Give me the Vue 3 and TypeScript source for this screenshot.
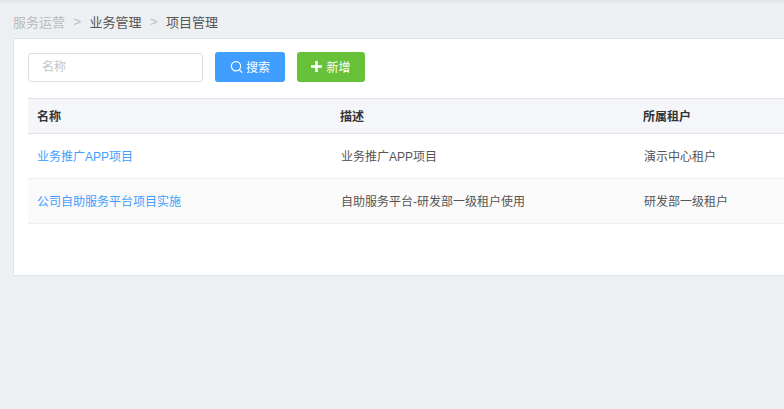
<template>
  <div class="page">
    <div class="breadcrumb">
      <span class="crumb muted">服务运营</span>
      <span class="sep">&gt;</span>
      <span class="crumb">业务管理</span>
      <span class="sep">&gt;</span>
      <span class="crumb">项目管理</span>
    </div>

    <div class="card">
      <div class="toolbar">
        <input class="search-input" type="text" placeholder="名称" />
        <button class="btn btn-search">
          <svg width="13" height="14" viewBox="0 0 13 14" fill="none">
            <circle cx="6" cy="6.2" r="4.6" stroke="currentColor" stroke-width="1.2" />
            <path d="M9.5 9.8l2.4 2.5" stroke="currentColor" stroke-width="1.2" stroke-linecap="round" />
          </svg>
          搜索
        </button>
        <button class="btn btn-add">
          <svg width="11" height="11" viewBox="0 0 11 11">
            <path d="M4.2 0h2.6v4.2H11v2.6H6.8V11H4.2V6.8H0V4.2h4.2z" fill="currentColor" />
          </svg>
          新增
        </button>
      </div>

      <div class="table">
        <div class="row head">
          <div class="cell">名称</div>
          <div class="cell">描述</div>
          <div class="cell">所属租户</div>
        </div>
        <div v-for="(item, index) in projects" :key="index" class="row body" :class="{ striped: index % 2 === 1 }">
          <div class="cell"><a class="link">{{ item.name }}</a></div>
          <div class="cell">{{ item.desc }}</div>
          <div class="cell">{{ item.tenant }}</div>
        </div>
      </div>
    </div>
  </div>
</template>

<script setup lang="ts">
import { ref } from 'vue';

interface Project {
  name: string;
  desc: string;
  tenant: string;
}

const projects = ref<Project[]>([
  { name: '业务推广APP项目', desc: '业务推广APP项目', tenant: '演示中心租户' },
  { name: '公司自助服务平台项目实施', desc: '自助服务平台-研发部一级租户使用', tenant: '研发部一级租户' }
]);
</script>

<style>
html,
body {
  margin: 0;
  overflow: hidden;
  background: #ecf0f3;
}
</style>

<style scoped>
.page {
  box-sizing: border-box;
  width: 784px;
  height: 409px;
  padding: 1px 0 0 13px;
  overflow: hidden;
  background: linear-gradient(#dfe2e6, #e7eaee 2px, #ecf0f3 4px);
  font-family: "Liberation Sans", "Noto Sans CJK SC", sans-serif;
  font-size: 12px;
  color: #555;
}

.breadcrumb {
  display: flex;
  align-items: center;
  height: 37px;
  padding-top: 3px;
  box-sizing: border-box;
  font-size: 13px;
  color: #555;
}

.crumb.muted {
  color: #bbb;
}

.sep {
  width: 24.5px;
  text-align: center;
  color: #bbb;
}

.card {
  box-sizing: border-box;
  width: 900px;
  height: 238px;
  padding: 13px 14px;
  background: #fff;
  border: 1px solid #dfe1e8;
}

.toolbar {
  display: flex;
  align-items: center;
  gap: 12px;
  height: 30px;
}

.search-input {
  box-sizing: border-box;
  width: 175px;
  height: 29px;
  padding: 0 13px;
  border: 1px solid #dcdfe6;
  border-radius: 3px;
  outline: none;
  font-family: inherit;
  font-size: 12px;
}

.search-input::placeholder {
  color: #c0c4cc;
}

.btn {
  display: flex;
  align-items: center;
  justify-content: center;
  height: 30px;
  padding: 0 0 1px;
  border: none;
  border-radius: 3px;
  color: #fff;
  font-family: inherit;
  font-size: 12px;
}

.btn-search {
  width: 70px;
  gap: 3px;
  background: #409eff;
}

.btn-add {
  width: 68px;
  gap: 4px;
  background: #67c23a;
}

.table {
  margin-top: 16px;
  border-top: 1px solid #dfe1e8;
}

.row {
  display: grid;
  grid-template-columns: 303px 303px 1fr;
  align-items: center;
  box-sizing: border-box;
  padding-top: 1px;
}

.row.head {
  height: 35px;
  background: #f5f6fa;
  border-bottom: 1px solid #dfe1e8;
  color: #333;
  font-weight: 700;
}

.row.head .cell {
  padding-left: 9px;
}

.row.body {
  height: 45px;
  border-bottom: 1px solid #ebeef5;
}

.row.striped {
  background: #fafafa;
}

.cell {
  padding-left: 9px;
  line-height: 16px;
}

.row.body .cell:not(:first-child) {
  padding-left: 10px;
}

.link {
  color: #409eff;
}
</style>
